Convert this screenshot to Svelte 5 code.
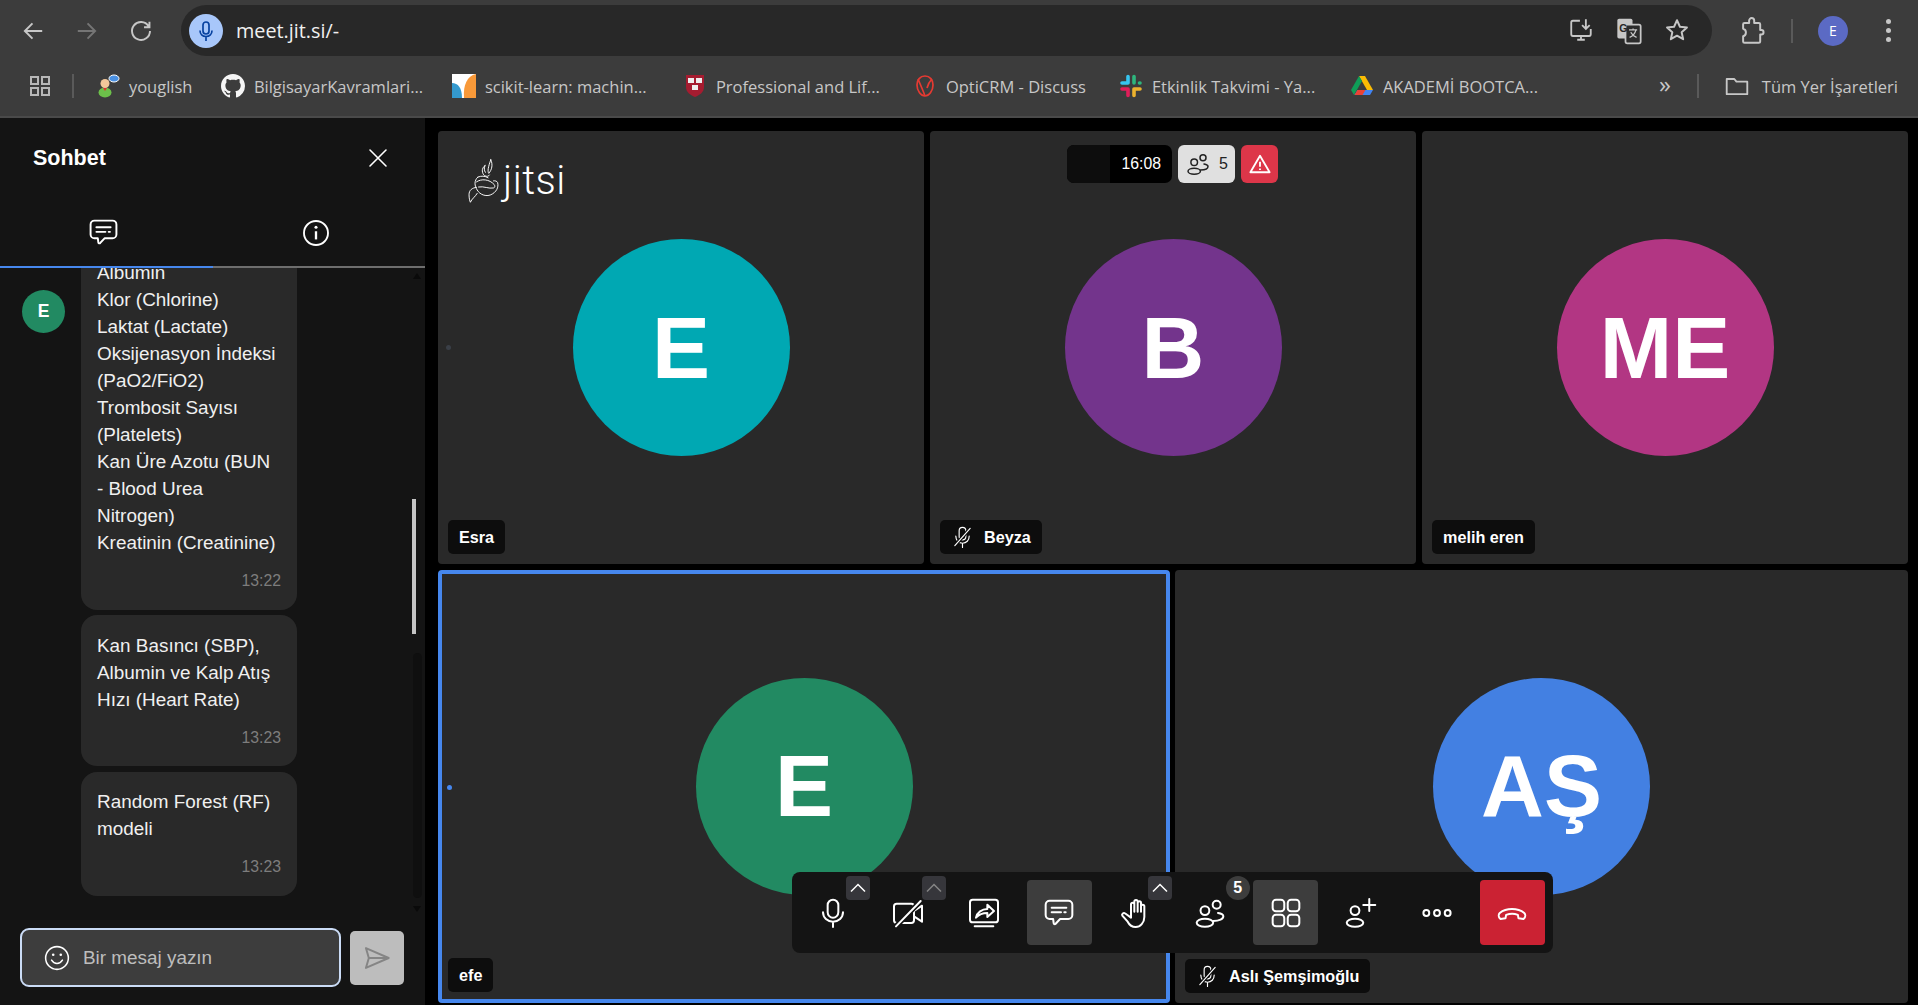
<script>
  const tiles1 = [
    { initials: 'E', color: '#00a8b3', name: 'Esra', muted: false, dot: true },
    { initials: 'B', color: '#73348c', name: 'Beyza', muted: true },
    { initials: 'ME', color: '#b23683', name: 'melih eren', muted: false }
  ];
  const tiles2 = [
    { initials: 'E', color: '#228a62', name: 'efe', muted: false, active: true, dot: true },
    { initials: 'AŞ', color: '#4380e2', name: 'Aslı Şemşimoğlu', muted: true }
  ];
</script>

{#snippet chatIcon(size)}
  <svg width={size} height={size} viewBox="0 0 24 24" fill="none" stroke="#fff" stroke-width="1.5" stroke-linejoin="round" stroke-linecap="round"><path d="M5 2.8h14a3 3 0 0 1 3 3v7.7a3 3 0 0 1-3 3h-6.2l-3.3 3.6c-.6.6-1.4.3-1.5-.5l-.4-3.1H5a3 3 0 0 1-3-3V5.800a3 3 0 0 1 3-3z"/><path d="M6.500 8h11M6.500 11.500h7M16 11.500h1"/></svg>
{/snippet}

{#snippet mutedMic()}
  <svg class="lmic" width="23" height="24" viewBox="0 0 24 24" fill="none" stroke="#fff" stroke-width="1.200" stroke-linecap="round"><rect x="8.500" y="2" width="7" height="13" rx="3.500"/><path d="M5 11c0 4.500 3 7.500 7 7.500s7-3 7-7.500M12 18.500V23"/><path d="M4 21L20 3" stroke="#0d0d0d" stroke-width="3.500"/><path d="M4 21L20 3"/></svg>
{/snippet}

{#snippet peopleIcon(size, color)}
  <svg width={size} height={size} viewBox="0 0 24 24" fill="none" stroke={color} stroke-width="1.500" stroke-linecap="round"><circle cx="8.200" cy="10.200" r="3.300"/><ellipse cx="8.200" cy="19.300" rx="6.200" ry="3"/><circle cx="17" cy="5.800" r="3"/><path d="M14.500 18c4.500 0 7.500-1.500 7.500-3.500 0-1.500-2-2.200-4-2.500"/></svg>
{/snippet}

{#snippet tile(t)}
  <div class="tile" class:active={t.active}>
    {#if t.dot}<span class="dot"></span>{/if}
    <div class="avatar" style:background={t.color}>{t.initials}</div>
    <div class="label">
      {#if t.muted}{@render mutedMic()}{/if}
      <span>{t.name}</span>
    </div>
    {#if t.name === 'Esra'}
      <div class="logo">
        <svg width="34" height="46" viewBox="80 90 100 135" fill="none" stroke="#fff" stroke-width="2.800" stroke-linecap="round" stroke-linejoin="round">
          <path d="M150 95c7 14 3 30-6 40-4-6-2-18 6-40z"/>
          <path d="M133 112c-12 8-9 24-1 30 6 3 12 2 14-2M133 112c-3 8-3 14 1 20"/>
          <path d="M112 146c-12 10-10 26-2 38 8 14 26 20 40 14 16-7 24-22 20-36-2-4-7-6-12-5"/>
          <path d="M108 160c14-10 38-8 52 8 3 4 2 9-2 10-14 3-28-6-44-3M112 146c10-4 20-4 30 2"/>
          <path d="M108 176c-13 2-22 8-22 22 0 10 2 18 4 22 4-10 14-16 20-26"/>
        </svg>
        <span>jitsi</span>
      </div>
    {/if}
  </div>
{/snippet}

<div class="page">
  <header class="chrome">
    <div class="navrow">
      <button class="nav" aria-label="Geri"><svg width="26" height="26" viewBox="0 0 24 24" fill="none" stroke="#c7c7c7" stroke-width="1.800"><path d="M20.500 12H4.500M11.500 5l-7 7 7 7"/></svg></button>
      <button class="nav" aria-label="İleri"><svg width="26" height="26" viewBox="0 0 24 24" fill="none" stroke="#757575" stroke-width="1.800"><path d="M3.500 12h16M12.500 5l7 7-7 7"/></svg></button>
      <button class="nav" aria-label="Yenile"><svg width="26" height="26" viewBox="0 0 24 24" fill="none" stroke="#c7c7c7" stroke-width="1.800"><path d="M19 7.500A8.300 8.300 0 1 0 20.300 12M19.800 3.500v5h-5"/></svg></button>
      <div class="omni">
        <span class="omnimic"><svg width="24" height="24" viewBox="0 0 24 24" fill="none" stroke="#0842a0" stroke-width="1.700"><rect x="9" y="3" width="6" height="12" rx="3"/><path d="M6 11.500c0 3.500 2.500 6 6 6s6-2.500 6-6M12 17.500V22"/></svg></span>
        <span class="url">meet.jit.si/-</span>
        <span class="omniicons">
          <span class="oi"><svg width="26" height="26" viewBox="0 0 24 24" fill="none" stroke="#c7c7c7" stroke-width="1.700"><path d="M11 3.500H4.500a1.500 1.500 0 0 0-1.500 1.500v11a1.500 1.500 0 0 0 1.500 1.500h15a1.500 1.500 0 0 0 1.500-1.500v-5M8.500 21h7M12 17.500V21M16.500 2v8.500M13 7.500l3.500 3.500L20 7.500"/></svg></span>
          <span class="oi"><svg width="28" height="28" viewBox="0 0 24 24"><rect x="2" y="1.500" width="13" height="17" rx="1.500" fill="#c7c7c7"/><rect x="9" y="6.500" width="13" height="16" rx="1.500" fill="#2c2c2c" stroke="#c7c7c7" stroke-width="1.500"/><text x="3.600" y="12.500" font-size="9" font-weight="700" fill="#282828" font-family="Liberation Sans">G</text><path d="M12 11h7M15.500 9.800V11M18 11c-1 3.500-3 5.500-5.500 6.500M13.500 13c1 2 3 3.500 5 4.500" fill="none" stroke="#c7c7c7" stroke-width="1.100"/></svg></span>
          <span class="oi"><svg width="26" height="26" viewBox="0 0 24 24" fill="none" stroke="#c7c7c7" stroke-width="1.800" stroke-linejoin="round"><path d="M12 3l2.700 6 6.500.7-4.900 4.400 1.400 6.400L12 17.200l-5.700 3.300 1.400-6.400-4.900-4.400 6.500-.7z"/></svg></span>
        </span>
      </div>
      <span class="ext"><svg width="28" height="30" viewBox="0 0 24 26" fill="none" stroke="#c7c7c7" stroke-width="1.700" stroke-linejoin="round"><path d="M9.500 6V4a2.200 2.200 0 0 1 4.400 0v2h4a1.200 1.200 0 0 1 1.200 1.200v5h1a1.900 1.900 0 0 1 0 3.800h-1v6a1.200 1.200 0 0 1-1.200 1.200H5.500a1.200 1.200 0 0 1-1.200-1.200v-4.500c3-.5 3.500-5.500 0-6.500V7.200A1.200 1.200 0 0 1 5.500 6z"/></svg></span>
      <span class="tsep"></span>
      <span class="profile">E</span>
      <span class="kebab"><i></i><i></i><i></i></span>
    </div>
    <div class="bookmarks">
      <span class="apps"><svg width="22" height="22" viewBox="0 0 22 22" fill="none" stroke="#b8b8b8" stroke-width="2"><rect x="2" y="2" width="7" height="7"/><rect x="13" y="2" width="7" height="7"/><rect x="2" y="13" width="7" height="7"/><rect x="13" y="13" width="7" height="7"/></svg></span>
      <span class="bsep"></span>
      <span class="bm w125"><svg width="24" height="24" viewBox="0 0 24 24"><ellipse cx="9" cy="18.500" rx="6.500" ry="5" fill="#6cc04a"/><path d="M7 14h4l-2 3z" fill="#d33"/><circle cx="9" cy="9.500" r="4.500" fill="#f2c79a"/><ellipse cx="18" cy="4.500" rx="5" ry="3.500" fill="#4a90e2" stroke="#fff" stroke-width="1"/></svg><span>youglish</span></span>
      <span class="bm w231"><svg width="24" height="24" viewBox="0 0 16 16"><path fill="#f5f5f5" d="M8 0C3.580 0 0 3.580 0 8c0 3.540 2.290 6.530 5.470 7.590.4.070.55-.17.55-.38 0-.19-.01-.82-.01-1.490-2.010.37-2.530-.49-2.690-.94-.09-.23-.48-.94-.82-1.130-.28-.15-.68-.52-.01-.53.63-.01 1.080.58 1.230.82.72 1.210 1.870.87 2.330.66.070-.52.28-.87.51-1.070-1.780-.2-3.640-.89-3.640-3.950 0-.87.31-1.590.82-2.150-.08-.2-.36-1.020.08-2.120 0 0 .67-.21 2.200.82.64-.18 1.320-.27 2-.27.68 0 1.360.09 2 .27 1.530-1.040 2.200-.82 2.200-.82.44 1.100.16 1.920.08 2.120.51.56.82 1.270.82 2.150 0 3.070-1.870 3.750-3.650 3.950.29.25.54.73.54 1.480 0 1.070-.01 1.930-.01 2.200 0 .21.15.46.55.38A8.013 8.013 0 0016 8c0-4.420-3.580-8-8-8z"/></svg><span>BilgisayarKavramlari...</span></span>
      <span class="bm w231"><svg width="24" height="24" viewBox="0 0 24 24"><rect width="24" height="24" fill="#fff"/><path d="M24 0C15 2 11 11 12 24h12z" fill="#f89939"/><path d="M0 9c6 0 10 5 10 15H0z" fill="#3499cd"/></svg><span>scikit-learn: machin...</span></span>
      <span class="bm w230"><svg width="24" height="24" viewBox="0 0 24 24"><path d="M3 1h18v12c0 5-4 8-9 10-5-2-9-5-9-10z" fill="#a51c30"/><rect x="5" y="4" width="6" height="5" fill="#eee"/><rect x="13" y="4" width="6" height="5" fill="#eee"/><rect x="9" y="11" width="6" height="5" fill="#eee"/></svg><span>Professional and Lif...</span></span>
      <span class="bm w206"><svg width="24" height="24" viewBox="0 0 24 24" fill="none" stroke="#e53a32" stroke-width="1.700"><path d="M12 2c5 0 8 4 8 9 0 6-4 11-8 11s-8-5-8-11c0-5 3-9 8-9z"/><path d="M5 5c2 5 5 11 7 17M19 5c-2 2-4 5-5 9"/></svg><span>OptiCRM - Discuss</span></span>
      <span class="bm w231"><svg width="24" height="24" viewBox="0 0 24 24" stroke-width="3.600" stroke-linecap="round" fill="none"><path d="M9 2.500v6.500M3 9h6" stroke="#36c5f0"/><path d="M15 2.500V9M21 9h-.5" stroke="#2eb67d"/><path d="M15 21.500V15M21 15h-6" stroke="#ecb22e"/><path d="M9 21.500V15M3 15h6" stroke="#e01e5a"/></svg><span>Etkinlik Takvimi - Ya...</span></span>
      <span class="bm w231"><svg width="24" height="24" viewBox="0 0 24 24"><path d="M9 2h6l8 14h-6z" fill="#fbbc04"/><path d="M9 2L1 16l3 5 8-14z" fill="#0f9d58"/><path d="M7.500 16H23l-3 5H4.500z" fill="#4285f4"/><path d="M4.500 21l3-5h8l-3 5z" fill="#ea4335"/></svg><span>AKADEMİ BOOTCA...</span></span>
      <span class="more">»</span>
      <span class="bsep two"></span>
      <span class="all"><svg width="26" height="26" viewBox="0 0 24 24" fill="none" stroke="#c7c7c7" stroke-width="1.700" stroke-linejoin="round"><path d="M2.500 5.500h7l2 2.500h10v11.500h-19z"/></svg><span>Tüm Yer İşaretleri</span></span>
    </div>
  </header>

  <div class="main">
    <aside class="side">
      <div class="sidehead">
        <h1>Sohbet</h1>
        <svg width="20" height="20" viewBox="0 0 20 20" stroke="#fff" stroke-width="1.600" stroke-linecap="round"><path d="M2 2l16 16M18 2L2 18"/></svg>
      </div>
      <div class="tabs">
        <div class="tab on">{@render chatIcon(31)}</div>
        <div class="tab"><svg width="28" height="28" viewBox="0 0 24 24" fill="none" stroke="#fff" stroke-width="1.600"><circle cx="12" cy="12" r="10.300"/><path d="M12 10.500v7" stroke-width="2"/><circle cx="12" cy="7" r="1.300" fill="#fff" stroke="none"/></svg></div>
      </div>
      <div class="messages">
        <div class="msgrow">
          <div class="chatavatar">E</div>
          <div class="bubbles">
            <div class="bubble">
              <p>Albumin<br>Klor (Chlorine)<br>Laktat (Lactate)<br>Oksijenasyon İndeksi (PaO2/FiO2)<br>Trombosit Sayısı (Platelets)<br>Kan Üre Azotu (BUN - Blood Urea Nitrogen)<br>Kreatinin (Creatinine)</p>
              <div class="time">13:22</div>
            </div>
            <div class="bubble">
              <p>Kan Basıncı (SBP), Albumin ve Kalp Atış Hızı (Heart Rate)</p>
              <div class="time">13:23</div>
            </div>
            <div class="bubble">
              <p>Random Forest (RF) modeli</p>
              <div class="time">13:23</div>
            </div>
          </div>
        </div>
        <div class="sbtrack"></div>
        <div class="sbthumb"></div>
        <div class="sbup"></div>
        <div class="sbdown"></div>
      </div>
      <div class="composer">
        <div class="input">
          <svg width="26" height="26" viewBox="0 0 24 24" fill="none" stroke="#fff" stroke-width="1.400" stroke-linecap="round"><circle cx="12" cy="12" r="10.500"/><path d="M7 14c1.200 2 3 3 5 3s3.800-1 5-3"/><circle cx="8.500" cy="9" r="1.200" fill="#fff" stroke="none"/><circle cx="15.500" cy="9" r="1.200" fill="#fff" stroke="none"/></svg>
          <span>Bir mesaj yazın</span>
        </div>
        <div class="send"><svg width="28" height="28" viewBox="0 0 24 24" fill="none" stroke="#858585" stroke-width="1.700" stroke-linejoin="round"><path d="M2.500 3.500L22 12 2.500 20.500 5 12zM5 12h17"/></svg></div>
      </div>
    </aside>

    <main class="stage">
      <div class="row r1">
        {#each tiles1 as t}{@render tile(t)}{/each}
      </div>
      <div class="row r2">
        {#each tiles2 as t}{@render tile(t)}{/each}
      </div>

      <div class="status">
        <div class="timer"><span class="blank"></span><span class="clock">16:08</span></div>
        <div class="count">{@render peopleIcon(24, '#222')}<span>5</span></div>
        <div class="warn"><svg width="22" height="22" viewBox="0 0 24 24" fill="none" stroke="#fff" stroke-width="2" stroke-linejoin="round"><path d="M12 3L22.500 21h-21z"/><path d="M12 9.500v5.500M12 17v1.500"/></svg></div>
      </div>

      <div class="toolbar">
        <div class="tb">
          <svg width="32" height="32" viewBox="0 0 24 24" fill="none" stroke="#fff" stroke-width="1.500" stroke-linecap="round"><rect x="8" y="2" width="8" height="13.500" rx="4"/><path d="M4.500 11.500c0 4 3.300 7 7.500 7s7.500-3 7.500-7M12 18.500V22.500"/></svg>
          <span class="chev"><svg width="24" height="24" viewBox="0 0 24 24" fill="none" stroke="#fff" stroke-width="1.500"><path d="M5 15.500L12 8.500l7 7"/></svg></span>
        </div>
        <div class="tb">
          <svg width="32" height="32" viewBox="0 0 24 24" fill="none" stroke="#fff" stroke-width="1.500" stroke-linejoin="round" stroke-linecap="round"><rect x="1.500" y="5" width="15" height="14.500" rx="2"/><path d="M16.500 14.500l6 4V6.500l-6 4"/><path d="M3 22L21.500 3" stroke="#141414" stroke-width="4"/><path d="M3 22L21.500 3"/></svg>
          <span class="chev dim"><svg width="24" height="24" viewBox="0 0 24 24" fill="none" stroke="#858585" stroke-width="1.500"><path d="M5 15.500L12 8.500l7 7"/></svg></span>
        </div>
        <div class="tb">
          <svg width="32" height="32" viewBox="0 0 24 24" fill="none" stroke="#fff" stroke-width="1.500" stroke-linejoin="round" stroke-linecap="round"><rect x="1.500" y="2" width="21" height="17" rx="2"/><path d="M5 22h14"/><path d="M6 15.500c.8-4 4.500-6.500 8.500-6.500V5.800l5 4.700-5 4.500v-3c-3.200 0-6.200 1-8.500 3.500z"/></svg>
        </div>
        <div class="tb on">{@render chatIcon(32)}</div>
        <div class="tb">
          <svg width="32" height="32" viewBox="0 0 24 24" fill="none" stroke="#fff" stroke-width="1.500" stroke-linejoin="round" stroke-linecap="round"><path d="M9 11V5.500a1.250 1.250 0 0 1 2.500 0V11M11.500 11V3.500a1.250 1.250 0 0 1 2.500 0V11M14 11V4.500a1.250 1.250 0 0 1 2.500 0V11M16.500 11V7a1.250 1.250 0 0 1 2.500 0v8c0 4.300-3 7.500-6.500 7.500-3 0-4.700-1.500-6-4L2.500 14c-.7-1.300.9-2.600 2.200-1.600L9 15.500V5.500"/></svg>
          <span class="chev"><svg width="24" height="24" viewBox="0 0 24 24" fill="none" stroke="#fff" stroke-width="1.500"><path d="M5 15.500L12 8.500l7 7"/></svg></span>
        </div>
        <div class="tb">
          {@render peopleIcon(32, '#fff')}
          <span class="badge">5</span>
        </div>
        <div class="tb on">
          <svg width="32" height="32" viewBox="0 0 24 24" fill="none" stroke="#fff" stroke-width="1.500"><rect x="2" y="2" width="8.700" height="8.700" rx="2.500"/><rect x="13.300" y="2" width="8.700" height="8.700" rx="2.500"/><rect x="2" y="13.300" width="8.700" height="8.700" rx="2.500"/><rect x="13.300" y="13.300" width="8.700" height="8.700" rx="2.500"/></svg>
        </div>
        <div class="tb">
          <svg width="32" height="32" viewBox="0 0 24 24" fill="none" stroke="#fff" stroke-width="1.500" stroke-linecap="round"><circle cx="7.500" cy="10.200" r="3.300"/><ellipse cx="7.500" cy="19.300" rx="6.200" ry="3"/><path d="M18.200 1.500v9M13.700 6h9"/></svg>
        </div>
        <div class="tb">
          <svg width="32" height="32" viewBox="0 0 24 24" fill="none" stroke="#fff" stroke-width="1.500"><circle cx="4" cy="12" r="2.200"/><circle cx="12" cy="12" r="2.200"/><circle cx="20" cy="12" r="2.200"/></svg>
        </div>
        <div class="tb hang">
          <svg width="32" height="32" viewBox="0 0 24 24" fill="none" stroke="#fff" stroke-width="1.500" stroke-linejoin="round"><path d="M2.800 16c-1-1.200-1-3 0-4 5-4 13.400-4 18.400 0 1 1 1 2.800 0 4l-.6.500-3.700-.5-.5-2.600c-2.800-1-5.800-1-8.800 0l-.5 2.600-3.700.5z"/></svg>
        </div>
      </div>
    </main>
  </div>
</div>

<style>
  :global(body) { margin: 0; background: #000; }
  .page { width: 1918px; height: 1005px; display: flex; flex-direction: column; overflow: hidden; font-family: "Liberation Sans", Arial, sans-serif; color: #fff; }
  svg { display: block; flex: none; }

  .chrome { height: 118px; flex: none; background: #3c3c3c; border-bottom: 2px solid #4a4a4a; box-sizing: border-box; font-family: "Open Sans", sans-serif; color: #c7c7c7; }
  .navrow { height: 61px; box-sizing: border-box; padding: 5px 0 5px 6px; display: flex; align-items: center; }
  .nav { width: 54px; height: 51px; background: none; border: 0; padding: 0; display: flex; align-items: center; justify-content: center; }
  .omni { width: 1531px; height: 51px; margin-left: 13px; border-radius: 26px; background: #282828; display: flex; align-items: center; box-sizing: border-box; padding-left: 8px; padding-right: 11px; }
  .omnimic { width: 34px; height: 34px; border-radius: 50%; background: #a8c7fa; display: flex; align-items: center; justify-content: center; }
  .url { margin-left: 13px; font-size: 19.800px; color: #f0f0f0; }
  .omniicons { margin-left: auto; display: flex; }
  .oi { width: 48px; display: flex; justify-content: center; }
  .ext { width: 40px; margin-left: 20px; display: flex; justify-content: center; }
  .tsep { width: 2px; height: 24px; margin-left: 19px; background: #5a5a5a; }
  .profile { width: 30px; height: 30px; margin-left: 25px; border-radius: 50%; background: #5b6ac4; color: #fff; font: 14px "Open Sans", sans-serif; display: flex; align-items: center; justify-content: center; }
  .kebab { width: 30px; margin-left: 25px; display: flex; flex-direction: column; align-items: center; gap: 4px; }
  .kebab i { width: 5px; height: 5px; border-radius: 50%; background: #c7c7c7; }

  .bookmarks { height: 50px; display: flex; align-items: center; padding-left: 29px; padding-right: 20px; font-size: 16.500px; white-space: nowrap; }
  .apps { width: 22px; }
  .bsep { width: 2px; height: 24px; background: #5a5a5a; margin: 0 22px 0 21px; }
  .bm { display: flex; align-items: center; gap: 9px; flex: none; box-sizing: border-box; overflow: hidden; }
  .w125 { width: 125px; }
  .w231 { width: 231px; }
  .w230 { width: 230px; }
  .w206 { width: 206px; }
  .more { margin-left: 78px; font-size: 24px; line-height: 24px; margin-top: -4px; width: 16px; }
  .bsep.two { margin: 0 24px 0 23px; }
  .all { display: flex; align-items: center; gap: 12px; margin-left: 1px; }

  .main { flex: 1; display: flex; min-height: 0; }
  .side { width: 425px; flex: none; background: #141414; display: flex; flex-direction: column; }
  .sidehead { height: 80px; flex: none; box-sizing: border-box; padding: 0 37px 0 33px; display: flex; align-items: center; justify-content: space-between; }
  .sidehead h1 { margin: 0; font-size: 21.500px; font-weight: 700; line-height: 28px; }
  .tabs { height: 70px; flex: none; display: flex; }
  .tab { flex: 1; border-bottom: 2px solid #6e6e6e; display: flex; align-items: center; justify-content: center; padding-right: 5px; padding-top: 1px; }
  .tab.on { border-bottom-color: #4687ed; }

  .messages { flex: 1; min-height: 0; position: relative; overflow: hidden; }
  .msgrow { display: flex; gap: 16px; padding-left: 22px; margin-top: -25px; }
  .chatavatar { width: 43px; height: 43px; margin-top: 47px; border-radius: 50%; background: #228a62; font-size: 17.500px; font-weight: 700; display: flex; align-items: center; justify-content: center; flex: none; }
  .bubbles { width: 216px; display: flex; flex-direction: column; gap: 5.800px; }
  .bubble { background: #292929; border-radius: 16px; padding: 16.200px 16px 18px; font-size: 18.900px; line-height: 27px; color: #f0f0f0; }
  .bubble p { margin: 0; }
  .time { margin-top: 14px; height: 21.500px; line-height: 21.500px; font-size: 15.800px; color: #7d7d7d; text-align: right; }
  .sbtrack { position: absolute; left: 413px; top: 385px; width: 9px; height: 245px; background: #0f0f0f; border-radius: 5px; }
  .sbthumb { position: absolute; left: 412px; top: 231px; width: 4px; height: 135px; background: #c4c4c4; }
  .sbup, .sbdown { position: absolute; left: 413px; width: 0; height: 0; border-left: 4.500px solid transparent; border-right: 4.500px solid transparent; }
  .sbup { top: 5px; border-bottom: 6px solid #0a0a0a; }
  .sbdown { top: 638px; border-top: 6px solid #0a0a0a; }

  .composer { flex: none; display: flex; align-items: center; gap: 9px; padding: 10px 0 18px 20px; }
  .input { width: 321px; height: 59px; box-sizing: border-box; border: 2px solid #cbdcf6; border-radius: 9px; background: #3d3d3d; display: flex; align-items: center; gap: 13px; padding-left: 22px; font-size: 18.900px; color: #bdbdbd; }
  .send { width: 54px; height: 54px; border-radius: 5px; background: #bdbdbd; display: flex; align-items: center; justify-content: center; }

  .stage { flex: 1; position: relative; background: #000; box-sizing: border-box; padding: 13px 10px 2px 13px; display: flex; flex-direction: column; gap: 5.500px; min-width: 0; }
  .row { flex: 1; display: grid; gap: 6px; }
  .r1 { grid-template-columns: repeat(3, 1fr); }
  .r2 { grid-template-columns: 732px 1fr; gap: 5px; }
  .tile { position: relative; background: #292929; border-radius: 4px; display: flex; align-items: center; justify-content: center; box-sizing: border-box; }
  .tile.active { border: 4px solid #4687ed; }
  .avatar { width: 217px; height: 217px; border-radius: 50%; display: flex; align-items: center; justify-content: center; font-size: 87px; font-weight: 700; color: #fff; }
  .dot { position: absolute; left: 8px; top: 50%; margin-top: -3px; width: 5px; height: 5px; border-radius: 50%; background: #3a3f47; }
  .tile.active .dot { left: 5px; margin-top: -1px; background: #4687ed; }
  .label { position: absolute; left: 10px; bottom: 10px; height: 34px; box-sizing: border-box; padding: 0 11px; background: #0d0d0d; border-radius: 5px; display: flex; align-items: center; gap: 10px; font-size: 16.200px; font-weight: 700; white-space: nowrap; }
  .tile.active .label { left: 6px; bottom: 7px; }
  .logo { position: absolute; left: 29px; top: 27px; display: flex; align-items: center; gap: 2px; font-family: Roboto, sans-serif; font-weight: 300; font-size: 40px; line-height: 46px; letter-spacing: .5px; color: #fff; }

  .status { position: absolute; top: 27px; left: 642px; display: flex; gap: 6px; height: 38px; }
  .timer { width: 105px; display: flex; background: #000; border-radius: 7px; overflow: hidden; }
  .blank { width: 43px; background: #0d0d0d; }
  .clock { flex: 1; font-size: 15.800px; line-height: 38px; text-align: right; padding-right: 11px; }
  .count { width: 57px; box-sizing: border-box; padding-left: 8px; background: #e0e0e0; border-radius: 6px; color: #222; display: flex; align-items: center; gap: 9px; font-size: 16px; }
  .warn { width: 37px; background: #dd3649; border-radius: 6px; display: flex; align-items: center; justify-content: center; }

  .toolbar { position: absolute; right: 365px; bottom: 52px; width: 761px; height: 81px; box-sizing: border-box; padding: 8px; background: #141414; border-radius: 8px; display: flex; gap: 10.500px; justify-content: center; }
  .tb { position: relative; width: 65px; height: 65px; border-radius: 4px; display: flex; align-items: center; justify-content: center; flex: none; }
  .tb.on { background: #3d3d3d; }
  .tb.hang { background: #cb2233; }
  .chev { position: absolute; right: -5px; top: -4px; width: 24px; height: 24px; background: #36363b; border-radius: 4px; }
  .badge { position: absolute; right: -7px; top: -4px; width: 24px; height: 24px; border-radius: 50%; background: #3d3d3d; font-size: 16px; font-weight: 700; display: flex; align-items: center; justify-content: center; }
</style>
